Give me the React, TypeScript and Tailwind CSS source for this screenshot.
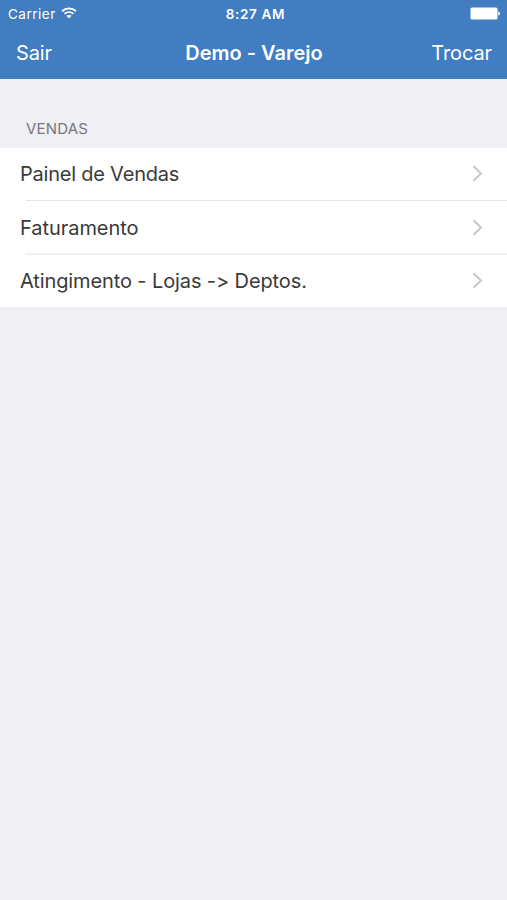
const rows = [
  { label: 'Painel de Vendas', tracking: 'tracking-[-0.22px]', space: 'h-[52px]', divider: '' },
  { label: 'Faturamento', tracking: 'tracking-[-0.05px]', space: 'h-[52px] pt-px', divider: 'h-px bg-[#e6e6e8]' },
  { label: 'Atingimento - Lojas -> Deptos.', tracking: 'tracking-[-0.11px]', space: 'h-[52px]', divider: 'h-[2px] bg-[#f1f1f2]' },
];

function WifiIcon() {
  return (
    <svg width="16" height="12" viewBox="0 0 16 12" className="mb-px" fill="none" stroke="currentColor" strokeWidth="1.9">
      <path d="M1 4.2C5 .4 11 .4 15 4.2M3.5 6.9C6.1 4.5 9.9 4.5 12.5 6.9" />
      <path d="M8 11.5 5.4 8.8C6.9 7.6 9.1 7.6 10.6 8.8Z" fill="currentColor" stroke="none" />
    </svg>
  );
}

function Battery() {
  return (
    <svg width="31" height="13" viewBox="0 0 31 13" fill="currentColor">
      <rect x="0.5" y="0.5" width="27" height="12" rx="1.5" />
      <path d="M28.3 4.5c2.300.5 2.300 3.500 0 4Z" />
    </svg>
  );
}

function Chevron() {
  return (
    <svg width="11" height="17" viewBox="0 0 11 17" className="mb-px" fill="none" stroke="#c7c7cc" strokeWidth="2">
      <path d="M1.5 1.200 9 8.500 1.500 15.800" />
    </svg>
  );
}

export default function App() {
  return (
    <div className="h-[900px] w-full bg-[#efeff4] font-['Inter','Liberation_Sans',sans-serif] text-[#3a3a3a] [font-feature-settings:'calt'_0,'liga'_0]">
      <header className="h-[79px] bg-[#417dc1] text-white">
        <div className="grid h-[27px] grid-cols-[1fr_auto_1fr] items-center pr-[6px] pl-[8px] text-[13.5px]">
          <div className="flex items-center gap-[5px]">
            <span className="pt-px tracking-[0.5px]">Carrier</span>
            <WifiIcon />
          </div>
          <div className="pt-px pl-[2px] font-semibold tracking-[0.65px]">8:27 AM</div>
          <div className="flex justify-end">
            <Battery />
          </div>
        </div>
        <div className="grid h-[52px] grid-cols-[1fr_auto_1fr] items-center px-[15px] text-[20px]">
          <button className="justify-self-start pl-px tracking-[-0.1px]">Sair</button>
          <h1 className="pl-px font-semibold">Demo - Varejo</h1>
          <button className="justify-self-end tracking-[-0.1px]">Trocar</button>
        </div>
      </header>
      <h2 className="h-[69px] pt-[39px] pl-[26px] text-[15px] tracking-[0.2px] text-[#77777c]">VENDAS</h2>
      <ul className="bg-white text-[20px]">
        {rows.map((row) => (
          <li key={row.label}>
            {row.divider && <div className={`ml-[26px] ${row.divider}`} />}
            <div className={`flex items-center justify-between pr-[24px] pl-[20px] ${row.space}`}>
              <span className={row.tracking}>{row.label}</span>
              <Chevron />
            </div>
          </li>
        ))}
      </ul>
    </div>
  );
}
